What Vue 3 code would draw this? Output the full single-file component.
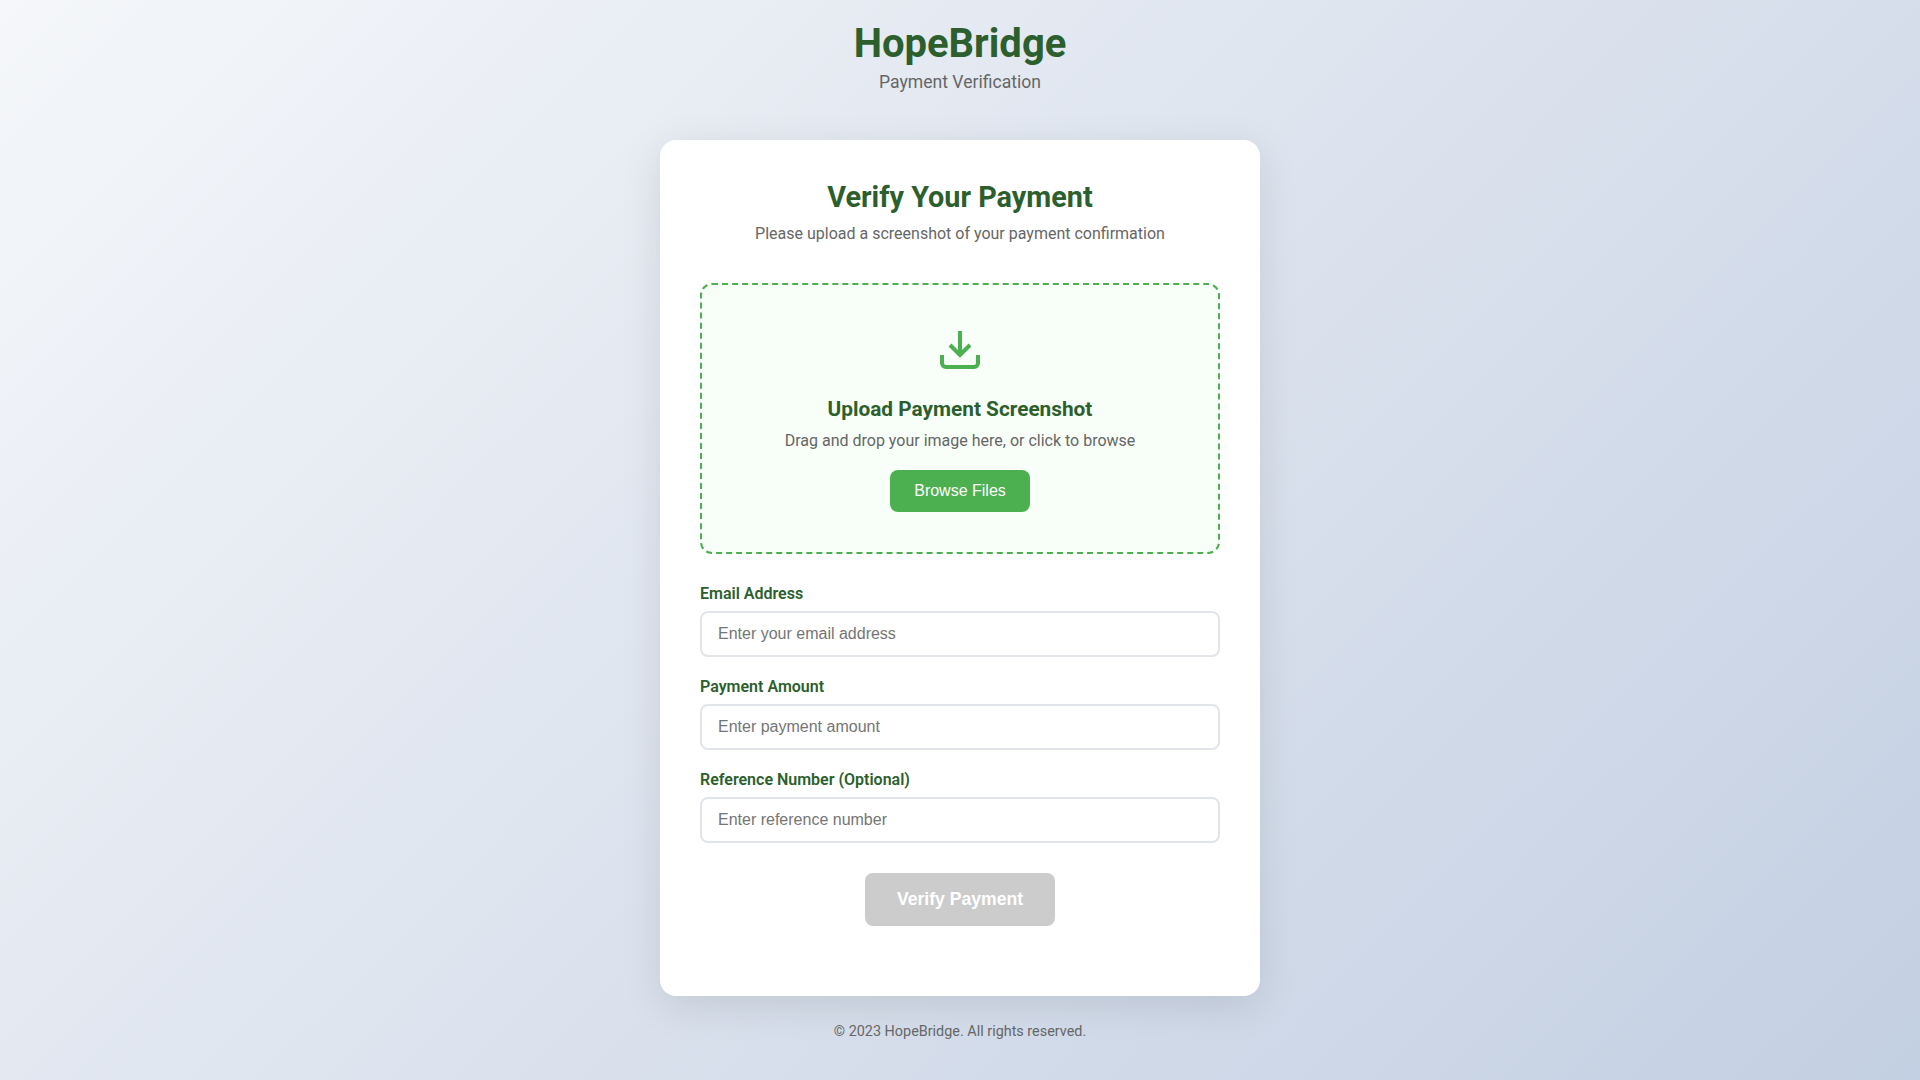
<template>
  <div class="page">
    <header class="top">
      <h1>HopeBridge</h1>
      <p>Payment Verification</p>
    </header>
    <main class="card">
      <div class="head">
        <h2>Verify Your Payment</h2>
        <p>Please upload a screenshot of your payment confirmation</p>
      </div>
      <div class="drop">
        <svg class="icon" viewBox="0 0 24 24" fill="none" stroke="#4caf50" stroke-width="2">
          <path d="M21 15v4a2 2 0 0 1-2 2H5a2 2 0 0 1-2-2v-4" />
          <polyline points="7 10 12 15 17 10" />
          <line x1="12" y1="15" x2="12" y2="3" />
        </svg>
        <h3>Upload Payment Screenshot</h3>
        <p>Drag and drop your image here, or click to browse</p>
        <button class="browse" type="button">Browse Files</button>
      </div>
      <div v-for="f in fields" :key="f.label" class="field">
        <label>{{ f.label }}</label>
        <input type="text" :placeholder="f.placeholder" />
      </div>
      <div class="actions">
        <button class="verify" type="button" disabled>Verify Payment</button>
      </div>
    </main>
    <footer class="foot">© 2023 HopeBridge. All rights reserved.</footer>
  </div>
</template>

<script setup>
const fields = [
  { label: 'Email Address', placeholder: 'Enter your email address' },
  { label: 'Payment Amount', placeholder: 'Enter payment amount' },
  { label: 'Reference Number (Optional)', placeholder: 'Enter reference number' },
]
</script>

<style>
html, body { margin: 0; }
</style>

<style scoped>
.page {
  min-height: 100vh;
  box-sizing: border-box;
  display: flex;
  flex-direction: column;
  align-items: center;
  padding: 20px;
  background: linear-gradient(135deg, #f5f7fa 0%, #c3cfe2 100%);
  font-family: Roboto, sans-serif;
  line-height: 1.2;
}
.top { text-align: center; margin-bottom: 47px; }
.top h1 { margin: 0 0 4px; font-size: 40px; font-weight: 700; color: #2c5f2d; }
.top p { margin: 0; font-size: 17.6px; color: #666; }
.card {
  width: 600px;
  box-sizing: border-box;
  background: #fff;
  border-radius: 16px;
  padding: 40px;
  box-shadow: 0 10px 40px rgba(0, 0, 0, 0.1);
}
.head { text-align: center; margin-bottom: 40px; }
.head h2 { margin: 0 0 9px; font-size: 28.8px; font-weight: 700; color: #2c5f2d; }
.head p { margin: 0; font-size: 16px; color: #666; }
.drop {
  border: 2px dashed #4caf50;
  border-radius: 12px;
  background: #f8fff8;
  padding: 40px 20px;
  text-align: center;
  margin-bottom: 30px;
}
.icon { display: block; width: 48px; height: 48px; margin: 0 auto 24px; }
.drop h3 { margin: 0 0 9px; font-size: 20.8px; font-weight: 700; color: #2c5f2d; }
.drop p { margin: 0 0 20px; font-size: 16px; color: #666; }
.browse {
  padding: 12px 24px;
  border: 0;
  border-radius: 8px;
  background: #4caf50;
  color: #fff;
  font-family: "Liberation Sans", Arial, sans-serif;
  font-size: 16px;
}
.field { margin-bottom: 20px; }
.field label {
  display: block;
  margin-bottom: 8px;
  font-size: 16px;
  line-height: 19px;
  font-weight: 600;
  color: #2c5f2d;
}
.field input {
  display: block;
  width: 100%;
  box-sizing: border-box;
  padding: 12px 16px;
  border: 2px solid #e1e5e9;
  border-radius: 8px;
  font-family: "Liberation Sans", Arial, sans-serif;
  font-size: 16px;
  outline: none;
  background: #fff;
}
.actions { text-align: center; margin-top: 30px; margin-bottom: 30px; }
.verify {
  padding: 16px 32px;
  border: 0;
  border-radius: 8px;
  background: #ccc;
  color: #fff;
  font-family: "Liberation Sans", Arial, sans-serif;
  font-size: 17.6px;
  font-weight: 700;
}
.foot { margin-top: 27px; font-size: 14.4px; color: #666; text-align: center; }
</style>
